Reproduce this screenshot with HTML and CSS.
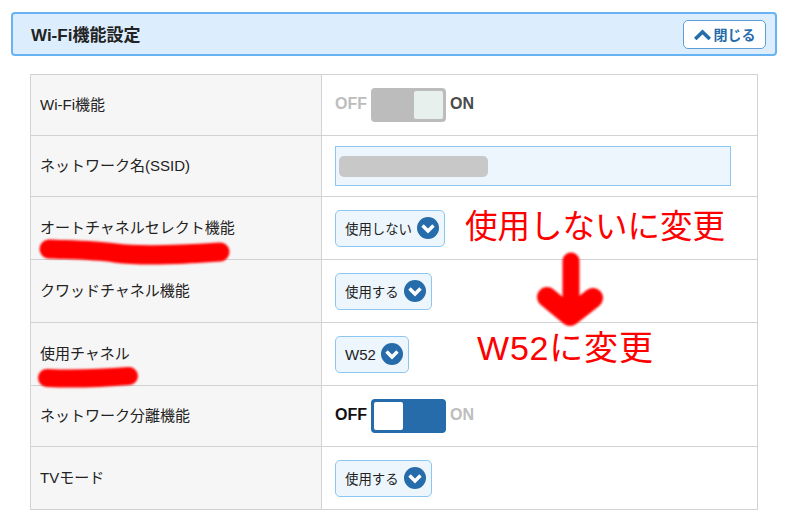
FILE: index.html
```html
<!DOCTYPE html>
<html lang="ja">
<head>
<meta charset="utf-8">
<title>Wi-Fi機能設定</title>
<link rel="stylesheet" href="styles.css">
</head>
<body>
<main class="page">
  <header class="bar">
    <h1 class="bar-title">Wi-Fi機能設定</h1>
    <button class="close" type="button">
      <svg class="close-icon" viewBox="0 0 17 11"><path d="M1.200 10 8.500 3 15.800 10" fill="none" stroke="#266cab" stroke-width="3.600"/></svg>閉じる
    </button>
  </header>
  <table class="settings">
    <tr class="r61"><th>Wi-Fi機能</th><td>
      <div class="toggle-row">
        <span class="lbl muted">OFF</span>
        <span class="toggle disabled"><span class="knob"></span></span>
        <span class="lbl dim">ON</span>
      </div></td></tr>
    <tr class="r61"><th>ネットワーク名(SSID)</th><td><div class="input"><span class="mask"></span></div></td></tr>
    <tr class="r63"><th>オートチャネルセレクト機能</th><td><div class="select">使用しない<svg class="chev" viewBox="0 0 22 22"><circle cx="11" cy="11" r="11" fill="#266cab"/><path d="M5.500 8.500 11 14l5.500-5.500" fill="none" stroke="#fff" stroke-width="3.400"/></svg></div></td></tr>
    <tr class="r63"><th>クワッドチャネル機能</th><td><div class="select">使用する<svg class="chev" viewBox="0 0 22 22"><circle cx="11" cy="11" r="11" fill="#266cab"/><path d="M5.500 8.500 11 14l5.500-5.500" fill="none" stroke="#fff" stroke-width="3.400"/></svg></div></td></tr>
    <tr class="r63"><th>使用チャネル</th><td><div class="select select-latin">W52<svg class="chev" viewBox="0 0 22 22"><circle cx="11" cy="11" r="11" fill="#266cab"/><path d="M5.500 8.500 11 14l5.500-5.500" fill="none" stroke="#fff" stroke-width="3.400"/></svg></div></td></tr>
    <tr class="r61"><th>ネットワーク分離機能</th><td>
      <div class="toggle-row">
        <span class="lbl strong">OFF</span>
        <span class="toggle active"><span class="knob"></span></span>
        <span class="lbl muted">ON</span>
      </div></td></tr>
    <tr class="r63"><th>TVモード</th><td><div class="select">使用する<svg class="chev" viewBox="0 0 22 22"><circle cx="11" cy="11" r="11" fill="#266cab"/><path d="M5.500 8.500 11 14l5.500-5.500" fill="none" stroke="#fff" stroke-width="3.400"/></svg></div></td></tr>
  </table>
  <svg class="marks" viewBox="0 0 800 526">
    <defs><filter id="soft"><feGaussianBlur stdDeviation="1"/></filter></defs>
    <g fill="none" stroke="#fe0000" stroke-linecap="round" stroke-linejoin="round" filter="url(#soft)">
      <path d="M49 249C75 250 95 250 115 253C145 257 190 254 220 252" stroke-width="19"/>
      <path d="M47 378C70 379 105 378 129 376" stroke-width="18"/>
      <path d="M571 261V316" stroke-width="17"/>
      <path d="M547 297 570 316 593 298" stroke-width="20"/>
    </g>
  </svg>
  <p class="note note-a">使用しないに変更</p>
  <p class="note note-b">W52に変更</p>
</main>
</body>
</html>
```
FILE: styles.css
```css
* { box-sizing: border-box; }
html, body { margin: 0; background: #fff; }
body {
  width: 800px;
  height: 526px;
  overflow: hidden;
  font-family: "Liberation Sans", "Noto Sans CJK JP", sans-serif;
  color: #222;
}
.page { position: relative; width: 800px; height: 526px; padding: 12px 23px 0 11px; }
.bar {
  height: 44px;
  display: flex;
  align-items: center;
  justify-content: space-between;
  padding: 0 9px 0 18px;
  background: #dceefd;
  border: 2px solid #68b3f1;
  border-radius: 4px;
}
.bar-title { margin: 0 0 2px; font-size: 17px; font-weight: 700; color: #222; }
.close {
  width: 83px;
  height: 29px;
  display: flex;
  align-items: center;
  justify-content: center;
  gap: 3px;
  padding: 0;
  background: #fff;
  border: 1px solid #5d9fd6;
  border-radius: 5px;
  color: #266cab;
  font: 700 14px "Liberation Sans", "Noto Sans CJK JP", sans-serif;
}
.close-icon { width: 17px; height: 11px; }
.settings {
  width: 728px;
  margin: 18px 0 0 19px;
  border-collapse: collapse;
  table-layout: fixed;
  font-size: 15px;
}
.settings th, .settings td { border: 1px solid #d2d2d2; padding: 0; }
.settings th {
  width: 291px;
  padding: 0 0 3px 9px;
  background: #f6f6f6;
  font-weight: 400;
  text-align: left;
  color: #222;
}
.settings td { padding-left: 13px; background: #fff; }
.r61 { height: 61px; }
.r63 { height: 63px; }
.toggle-row { display: flex; align-items: center; gap: 4px; }
.lbl { font-size: 16px; font-weight: 700; line-height: 18px; width: 32px; padding-bottom: 3px; height: 21px; }
.muted { color: #bdbdbd; }
.dim { color: #4b4b4b; }
.strong { color: #111; }
.toggle {
  display: flex;
  width: 75px;
  height: 34px;
  border-radius: 4px;
  border: 3px solid;
}
.toggle.disabled { background: #bcbcbc; border-color: #bcbcbc; justify-content: flex-end; }
.toggle.disabled .knob { background: #e7f0ed; }
.toggle.active { background: #266cab; border-color: #266cab; }
.toggle.active .knob { background: #fff; }
.knob { width: 29px; height: 28px; border-radius: 2px; }
.input {
  width: 396px;
  height: 40px;
  display: flex;
  align-items: center;
  padding-left: 3px;
  background: #edf6fd;
  border: 1px solid #8cc6f3;
}
.mask { width: 149px; height: 21px; border-radius: 5px; background: #c8c8c8; }
.select {
  display: inline-flex;
  align-items: center;
  gap: 5px;
  height: 37px;
  padding: 0 5px 0 9px;
  background: #edf6fd;
  border: 1px solid #8cc6f3;
  border-radius: 5px;
  font-size: 13.400px;
  color: #222;
  vertical-align: middle;
}
.select-latin { font-size: 15px; }
.chev { width: 22px; height: 22px; }
.marks { position: absolute; left: 0; top: 0; width: 800px; height: 526px; pointer-events: none; }
.note {
  position: absolute;
  margin: 0;
  color: #fe0000;
  font-size: 32.500px;
  line-height: 36px;
  white-space: nowrap;
}
.note-a { left: 465px; top: 209px; }
.note-b { left: 477px; top: 330px; font-size: 34px; letter-spacing: 0.800px; }
```
